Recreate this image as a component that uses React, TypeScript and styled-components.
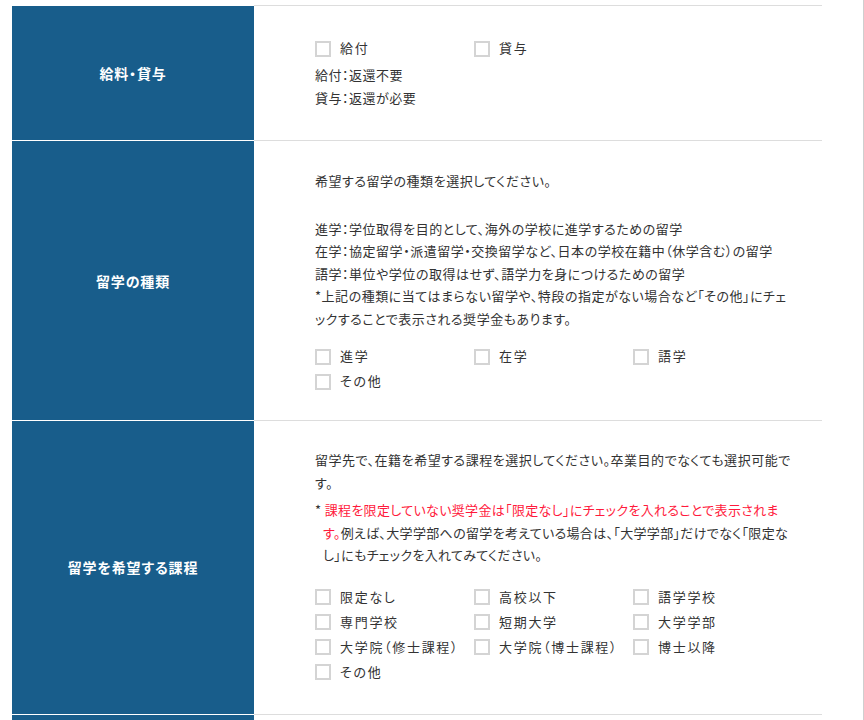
import React from "react";
import styled, { createGlobalStyle } from "styled-components";

const GlobalStyle = createGlobalStyle`
  html, body {
    margin: 0;
    padding: 0;
    background: #ffffff;
  }
  body {
    font-family: "Noto Sans CJK JP", "Noto Sans", sans-serif;
    color: #333333;
    font-feature-settings: "palt";
  }
`;

const Page = styled.div`
  width: 864px;
  min-height: 100vh;
  box-sizing: border-box;
  border-right: 1px solid #cfcfcf;
  padding: 5px 0 0 12px;
`;

const Table = styled.div`
  width: 810px;
`;

const Row = styled.div`
  display: grid;
  grid-template-columns: 242px 1fr;

  &:first-child > * {
    border-top: 1px solid #dddddd;
  }
  &:first-child > :first-child {
    border-top-color: #ffffff;
  }
`;

const HeadCell = styled.div`
  display: flex;
  align-items: center;
  justify-content: center;
  background: #185d8b;
  color: #ffffff;
  font-size: 14px;
  font-weight: 700;
  letter-spacing: 0.06em;
  border-bottom: 1px solid #ffffff;
`;

const BodyCell = styled.div<{ $top?: number; $bottom?: number }>`
  padding: ${(p) => p.$top ?? 29}px 30px ${(p) => p.$bottom ?? 27}px 61px;
  border-bottom: 1px solid #dddddd;
  font-size: 13px;
  line-height: 22.5px;
  letter-spacing: 0.04em;
`;

const Text = styled.p<{ $gap?: number }>`
  margin: ${(p) => p.$gap ?? 0}px 0 0;
`;

const Note = styled.p<{ $gap?: number }>`
  margin: ${(p) => p.$gap ?? 0}px 0 0;
  padding-left: 8px;
  text-indent: -8px;
  letter-spacing: 0.025em;
`;

const Red = styled.span`
  color: #ff1a3c;
`;

const CheckGrid = styled.div<{ $gap?: number }>`
  display: grid;
  grid-template-columns: repeat(3, 159px);
  margin-top: ${(p) => p.$gap ?? 0}px;
`;

const CheckItem = styled.label`
  display: flex;
  align-items: center;
  height: 25px;
  font-size: 13px;
  letter-spacing: 0.13em;
  white-space: nowrap;
  cursor: pointer;
`;

const Box = styled.span`
  flex: none;
  width: 16px;
  height: 16px;
  box-sizing: border-box;
  border: 2px solid #d4d4d4;
  background: #ffffff;
  margin-right: 9px;
`;

function Check({ label }: { label: string }) {
  return (
    <CheckItem>
      <Box />
      {label}
    </CheckItem>
  );
}

const courses = [
  "限定なし",
  "高校以下",
  "語学学校",
  "専門学校",
  "短期大学",
  "大学学部",
  "大学院（修士課程）",
  "大学院（博士課程）",
  "博士以降",
  "その他",
];

export default function App() {
  return (
    <>
      <GlobalStyle />
      <Page>
        <Table>
          <Row>
            <HeadCell>給料・貸与</HeadCell>
            <BodyCell $top={30} $bottom={31}>
              <CheckGrid>
                <Check label="給付" />
                <Check label="貸与" />
              </CheckGrid>
              <Text $gap={3}>
                給付：返還不要
                <br />
                貸与：返還が必要
              </Text>
            </BodyCell>
          </Row>

          <Row>
            <HeadCell>留学の種類</HeadCell>
            <BodyCell $top={29} $bottom={26}>
              <Text>希望する留学の種類を選択してください。</Text>
              <Text $gap={25}>
                進学：学位取得を目的として、海外の学校に進学するための留学
                <br />
                在学：協定留学・派遣留学・交換留学など、日本の学校在籍中（休学含む）の留学
                <br />
                語学：単位や学位の取得はせず、語学力を身につけるための留学
                <br />
                *上記の種類に当てはまらない留学や、特段の指定がない場合など「その他」にチェックすることで表示される奨学金もあります。
              </Text>
              <CheckGrid $gap={14}>
                <Check label="進学" />
                <Check label="在学" />
                <Check label="語学" />
                <Check label="その他" />
              </CheckGrid>
            </BodyCell>
          </Row>

          <Row>
            <HeadCell>留学を希望する課程</HeadCell>
            <BodyCell $top={28} $bottom={29}>
              <Text>
                留学先で、在籍を希望する課程を選択してください。卒業目的でなくても選択可能です。
              </Text>
              <Note $gap={5}>
                *&nbsp;
                <Red>
                  課程を限定していない奨学金は「限定なし」にチェックを入れることで表示されます。
                </Red>
                例えば、大学学部への留学を考えている場合は、「大学学部」だけでなく「限定なし」にもチェックを入れてみてください。
              </Note>
              <CheckGrid $gap={18}>
                {courses.map((c) => (
                  <Check key={c} label={c} />
                ))}
              </CheckGrid>
            </BodyCell>
          </Row>

          <Row>
            <HeadCell>留学先の国・地域</HeadCell>
            <BodyCell>
              <Text>留学を希望する国・地域を選択してください。</Text>
              <CheckGrid $gap={14}>
                <Check label="アメリカ" />
                <Check label="カナダ" />
                <Check label="イギリス" />
                <Check label="オーストラリア" />
                <Check label="その他" />
              </CheckGrid>
            </BodyCell>
          </Row>
        </Table>
      </Page>
    </>
  );
}
